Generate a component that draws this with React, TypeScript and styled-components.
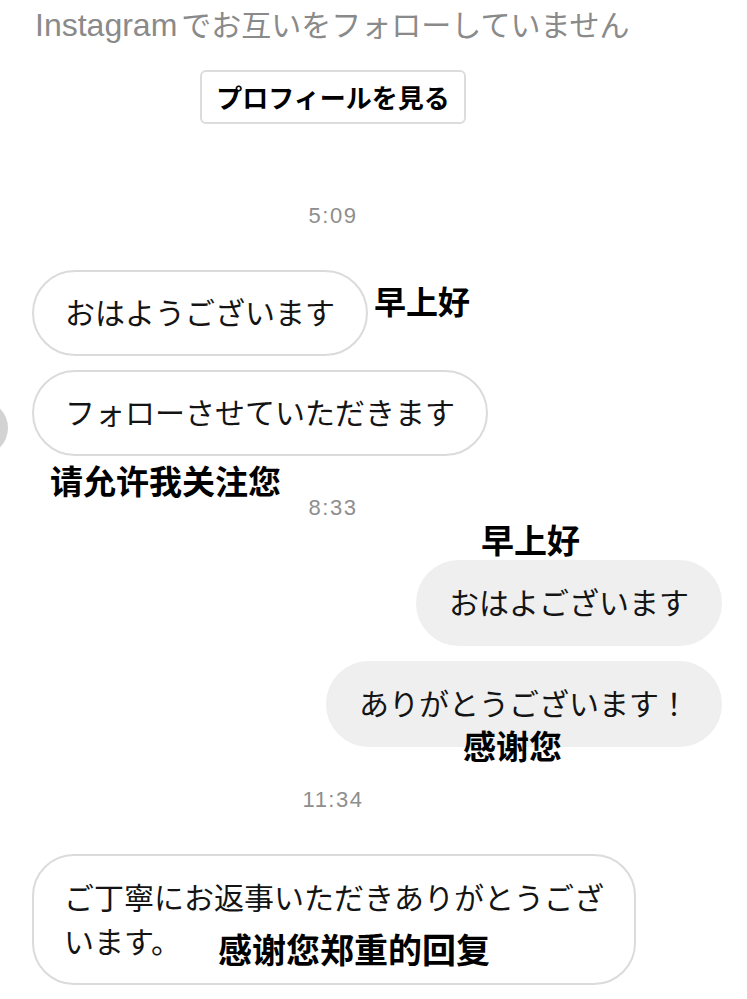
import React from 'react';
import styled, { createGlobalStyle } from 'styled-components';

const GlobalStyle = createGlobalStyle`
  body {
    margin: 0;
    background: #ffffff;
    font-family: 'Noto Sans CJK JP', 'Noto Sans', sans-serif;
    color: #111111;
  }
`;

const Page = styled.div`
  width: 747px;
  height: 999px;
  overflow: hidden;
  position: relative;
`;

const Notice = styled.div`
  padding-left: 35px;
  font-size: 30px;
  line-height: 46px;
  color: #8a8a8a;
  white-space: nowrap;

  .latin {
    font-family: 'Liberation Sans', sans-serif;
    font-size: 32px;
    margin-right: 4px;
  }
`;

const ProfileButton = styled.div`
  margin: 22px 0 0 200px;
  width: 266px;
  height: 54px;
  box-sizing: border-box;
  border: 2px solid #dcdcdc;
  border-radius: 6px;
  display: flex;
  align-items: center;
  justify-content: center;
  padding-bottom: 2px;
  font-size: 26px;
  font-weight: 700;
  color: #000;
`;

const Stamp = styled.div<{ $gap: number; $lh?: number }>`
  width: 666px;
  margin-top: ${p => p.$gap}px;
  text-align: center;
  font-family: 'Liberation Sans', sans-serif;
  font-size: 22px;
  letter-spacing: 1.5px;
  line-height: ${p => p.$lh ?? 30}px;
  color: #8e8e8e;
`;

const Row = styled.div<{ $gap: number; $right?: boolean }>`
  display: flex;
  align-items: flex-start;
  margin-top: ${p => p.$gap}px;
  padding-left: 32px;
  padding-right: 25px;
  justify-content: ${p => (p.$right ? 'flex-end' : 'flex-start')};
`;

const AvatarRow = styled(Row)`
  align-items: flex-end;
  gap: 24px;
`;

const Avatar = styled.div`
  margin-left: -80px;
  width: 56px;
  height: 56px;
  border-radius: 50%;
  background: #d3d3d3;
  flex: none;
`;

const Bubble = styled.div<{ $mine?: boolean; $multi?: boolean }>`
  position: relative;
  box-sizing: border-box;
  height: ${p => (p.$multi ? 'auto' : '86px')};
  max-width: 604px;
  display: flex;
  align-items: center;
  padding: ${p => (p.$multi ? '18px 30px 21px' : '0 31px 5px')};
  border: 2px solid ${p => (p.$mine ? '#efefef' : '#dbdbdb')};
  background: ${p => (p.$mine ? '#efefef' : '#ffffff')};
  border-radius: ${p => (p.$multi ? '42px' : '43px')};
  font-size: 30px;
  line-height: 44px;
  color: #141414;
  white-space: ${p => (p.$multi ? 'normal' : 'nowrap')};
`;

const Note = styled.div<{ $gap?: number; $left?: number }>`
  margin-top: ${p => p.$gap ?? 0}px;
  margin-left: ${p => p.$left ?? 0}px;
  font-family: 'Noto Sans CJK SC', sans-serif;
  font-size: 33px;
  font-weight: 700;
  line-height: 34px;
  color: #000;
  white-space: nowrap;
`;

const SideNote = styled(Note)`
  margin-top: 13px;
  margin-left: 6px;
  font-size: 32px;
`;

const OverNote = styled(Note)<{ $x: number; $y: number; $size?: number }>`
  position: absolute;
  left: ${p => p.$x}px;
  top: ${p => p.$y}px;
  margin: 0;
  font-size: ${p => p.$size ?? 33}px;
`;

const NextBubble = styled.div`
  margin: 14px 0 0 38px;
  width: 560px;
  height: 80px;
  border: 2px solid #dbdbdb;
  border-radius: 42px;
`;

export default function App() {
  return (
    <Page>
      <GlobalStyle />
      <Notice>
        <span className="latin">Instagram</span>でお互いをフォローしていません
      </Notice>
      <ProfileButton>プロフィールを見る</ProfileButton>

      <Stamp $gap={77}>5:09</Stamp>

      <Row $gap={39}>
        <Bubble>おはようございます</Bubble>
        <SideNote>早上好</SideNote>
      </Row>
      <AvatarRow $gap={14}>
        <Avatar />
        <Bubble>フォローさせていただきます</Bubble>
      </AvatarRow>
      <Note $gap={7} $left={50}>请允许我关注您</Note>

      <Stamp $gap={0} $lh={22}>8:33</Stamp>

      <Note $gap={3} $left={481}>早上好</Note>
      <Row $gap={4} $right>
        <Bubble $mine>おはよございます</Bubble>
      </Row>
      <Row $gap={15} $right>
        <Bubble $mine>
          ありがとうございます！
          <OverNote $x={135} $y={65}>感谢您</OverNote>
        </Bubble>
      </Row>

      <Stamp $gap={38}>11:34</Stamp>

      <Row $gap={39}>
        <Bubble $multi>
          <span>ご丁寧にお返事いただきありがとうございます。</span>
          <OverNote $x={184} $y={76} $size={34}>感谢您郑重的回复</OverNote>
        </Bubble>
      </Row>
      <NextBubble />
    </Page>
  );
}
